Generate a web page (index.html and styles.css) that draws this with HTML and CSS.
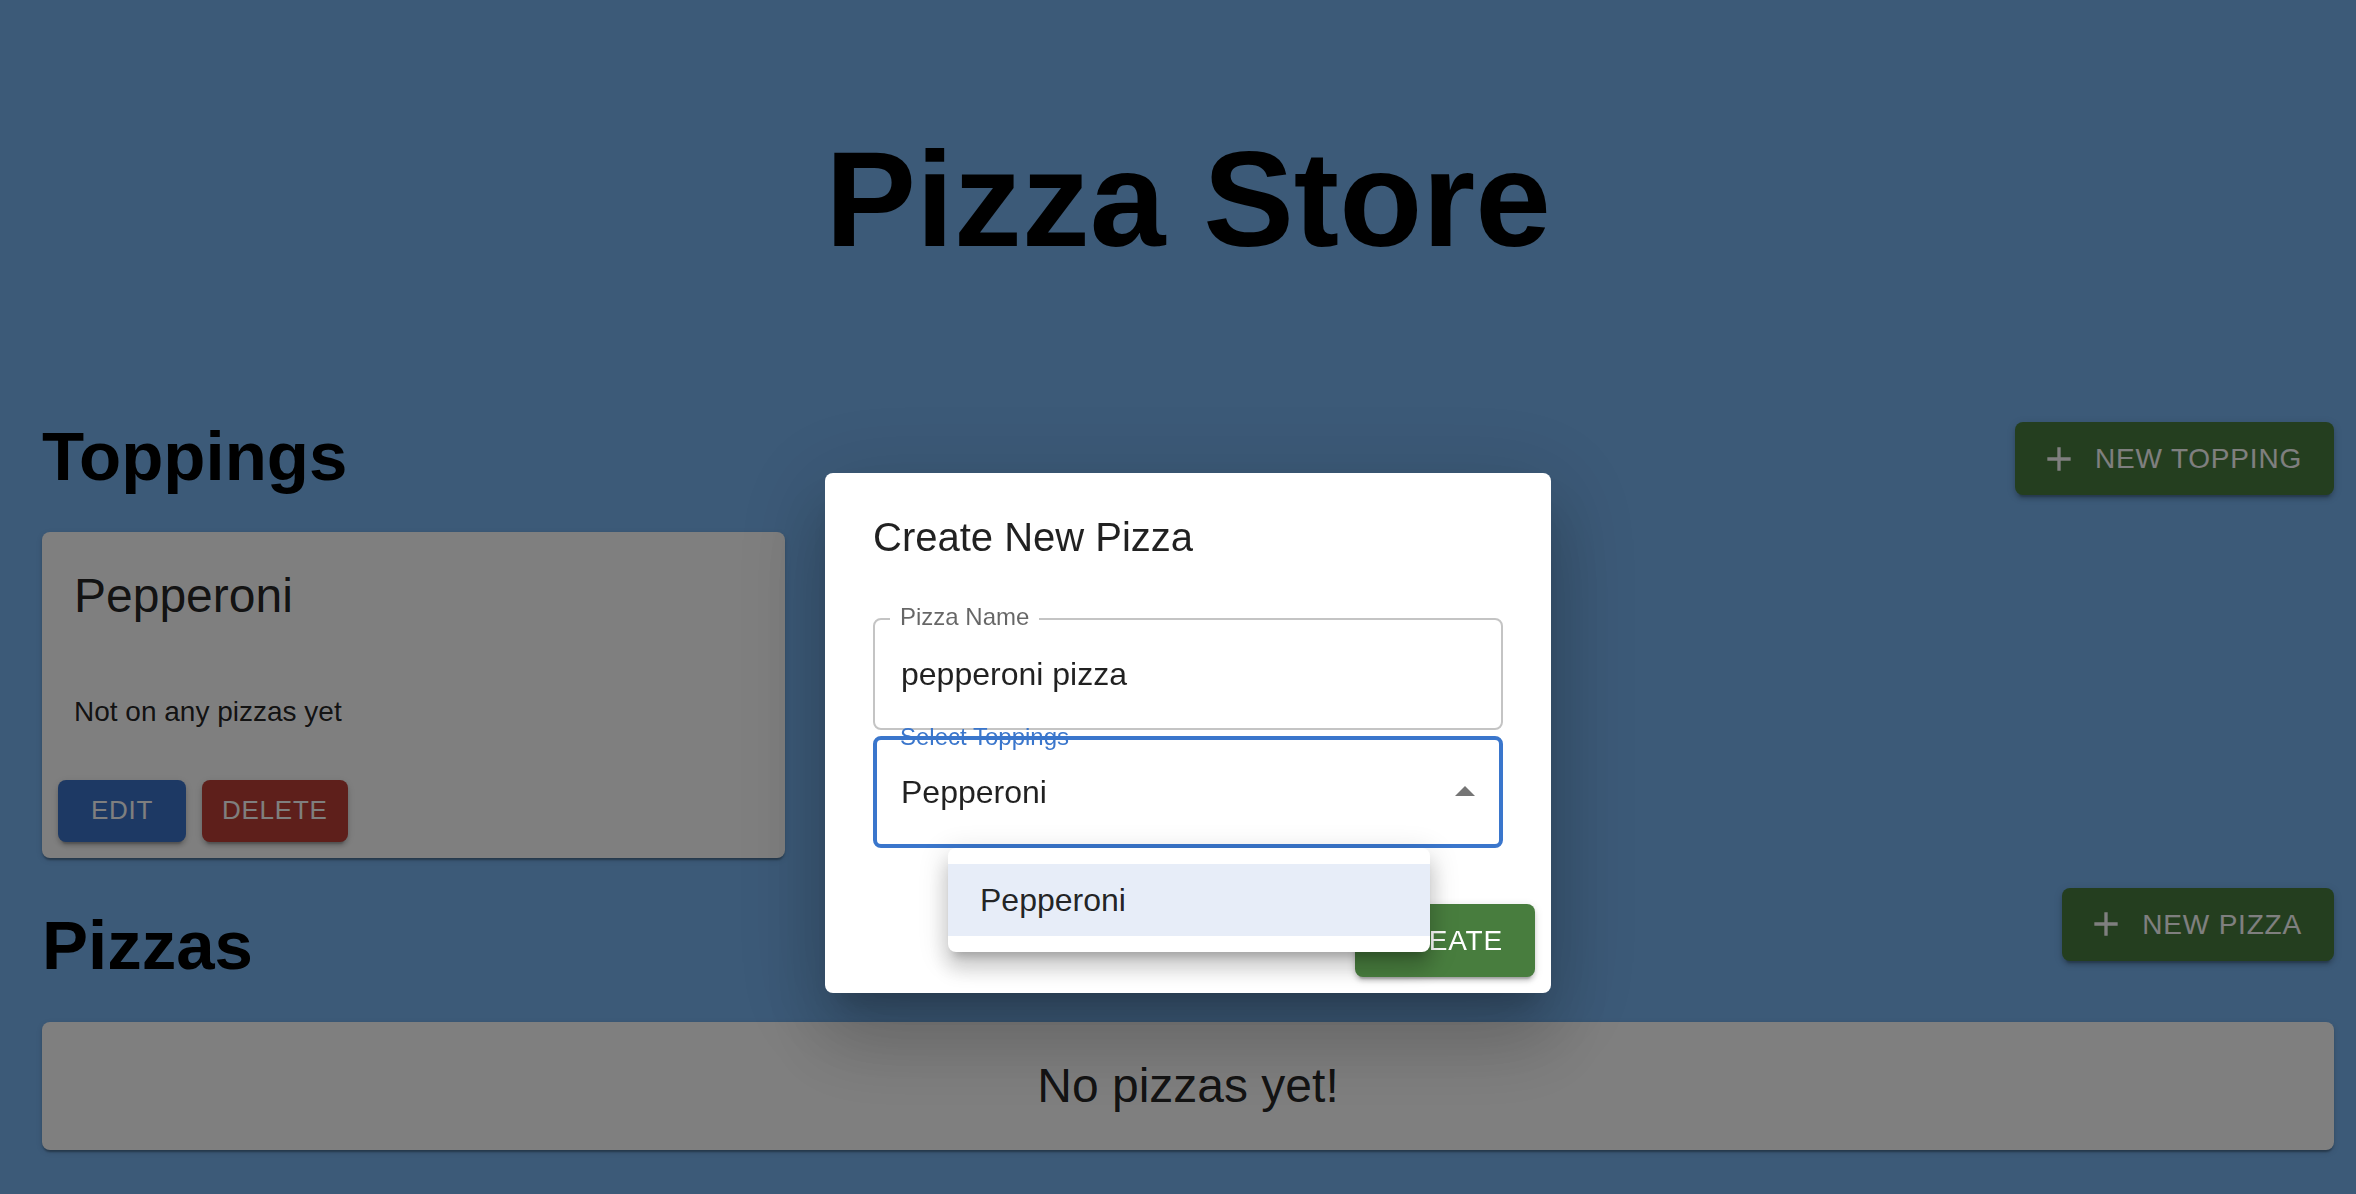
FILE: index.html
```html
<!DOCTYPE html>
<html lang="en">
<head>
<meta charset="utf-8">
<title>Pizza Store</title>
<link rel="stylesheet" href="styles.css">
</head>
<body>
<div class="page">
  <h1 class="title">Pizza Store</h1>

  <section class="section">
    <div class="section-head">
      <h2 class="section-title">Toppings</h2>
      <button class="btn btn-green btn-head-toppings" type="button">
        <svg class="btn-icon" viewBox="0 0 24 24" width="40" height="40"><path d="M19 13h-6v6h-2v-6H5v-2h6V5h2v6h6v2z"/></svg>
        New Topping
      </button>
    </div>
    <div class="grid">
      <div class="card">
        <div class="card-content">
          <div class="card-title">Pepperoni</div>
          <p class="card-text">Not on any pizzas yet</p>
        </div>
        <div class="card-actions">
          <button class="btn btn-small btn-blue" type="button">Edit</button>
          <button class="btn btn-small btn-red" type="button">Delete</button>
        </div>
      </div>
    </div>
  </section>

  <section class="section section-pizzas">
    <div class="section-head">
      <h2 class="section-title section-title-pizzas">Pizzas</h2>
      <button class="btn btn-green" type="button">
        <svg class="btn-icon" viewBox="0 0 24 24" width="40" height="40"><path d="M19 13h-6v6h-2v-6H5v-2h6V5h2v6h6v2z"/></svg>
        New Pizza
      </button>
    </div>
    <div class="card card-empty">
      <div class="card-title">No pizzas yet!</div>
    </div>
  </section>
</div>

<div class="backdrop"></div>

<div class="dialog-container">
  <div class="dialog">
    <h2 class="dialog-title">Create New Pizza</h2>
    <div class="dialog-content">
      <div class="field">
        <span class="field-label">Pizza Name</span>
        <div class="field-value">pepperoni pizza</div>
      </div>
      <div class="field field-select">
        <span class="select-label">Select Toppings</span>
        <div class="select-display">
          <span class="select-value">Pepperoni</span>
          <svg class="select-icon" viewBox="0 0 24 24" width="48" height="48"><path d="M7 14l5-5 5 5z"/></svg>
        </div>
      </div>
    </div>
    <div class="dialog-actions">
      <button class="btn btn-green btn-create" type="button">Create</button>
    </div>
  </div>
</div>

<div class="menu">
  <ul class="menu-list">
    <li class="menu-item selected">Pepperoni</li>
  </ul>
</div>
</body>
</html>
```

FILE: styles.css
```css
* {
  box-sizing: border-box;
}

html, body {
  margin: 0;
  padding: 0;
}

body {
  background: #78b4f0;
  font-family: "Liberation Sans", Arial, Helvetica, sans-serif;
  color: rgba(0, 0, 0, 0.87);
  min-height: 1194px;
  overflow: hidden;
}

.page {
  padding: 118px 22px 0 42px;
}

.title {
  margin: 0;
  text-align: center;
  font-size: 136px;
  line-height: 163px;
  font-weight: 700;
  color: #000;
}

.section {
  margin-top: 136px;
}

.section-pizzas {
  margin-top: 30px;
}

.section-head {
  display: flex;
  justify-content: space-between;
  align-items: flex-start;
}

.section-title {
  margin: 0;
  font-size: 69px;
  line-height: 80px;
  font-weight: 700;
  color: #000;
}

.section-title-pizzas {
  margin-top: 18px;
}

.grid {
  display: grid;
  grid-template-columns: repeat(3, 1fr);
  gap: 32px;
  margin-top: 35px;
}

.section-pizzas .card-empty {
  margin-top: 36px;
}

.card {
  background: #fff;
  border-radius: 8px;
  box-shadow: 0 4px 2px -2px rgba(0,0,0,0.2), 0 2px 2px 0 rgba(0,0,0,0.14), 0 2px 6px 0 rgba(0,0,0,0.12);
  overflow: hidden;
}

.card-content {
  padding: 32px;
}

.card-title {
  font-size: 48px;
  line-height: 64px;
  font-weight: 400;
}

.card-text {
  margin: 64px 0 0;
  font-size: 28px;
  line-height: 40px;
}

.card-actions {
  display: flex;
  align-items: center;
  gap: 16px;
  padding: 16px;
}

.card-empty {
  padding: 32px;
  text-align: center;
}

.btn {
  display: inline-flex;
  align-items: center;
  justify-content: center;
  border: 0;
  margin: 0;
  min-width: 128px;
  padding: 12px 32px;
  border-radius: 8px;
  font-family: inherit;
  font-size: 28px;
  line-height: 49px;
  font-weight: 400;
  letter-spacing: 0.8px;
  text-transform: uppercase;
  color: #fff;
  box-shadow: 0 6px 2px -4px rgba(0,0,0,0.2), 0 4px 4px 0 rgba(0,0,0,0.14), 0 2px 10px 0 rgba(0,0,0,0.12);
  cursor: pointer;
}

.section-head .btn-head-toppings {
  margin-top: 5px;
}

.btn-small {
  padding: 8px 20px;
  font-size: 26px;
  line-height: 45.5px;
  letter-spacing: 0.74px;
}

.btn-green {
  background: #487d3e;
}

.btn-blue {
  background: #3a72c8;
}

.btn-red {
  background: #bc3e36;
}

.btn-icon {
  display: block;
  fill: currentColor;
  margin: 0 16px 0 -8px;
  flex: none;
}

.backdrop {
  position: fixed;
  inset: 0;
  background: rgba(0, 0, 0, 0.5);
}

.dialog-container {
  position: fixed;
  inset: 0;
  display: flex;
  justify-content: center;
  align-items: flex-start;
  padding: 473px 0 0 20px;
}

.dialog {
  width: 726px;
  background: #fff;
  border-radius: 8px;
  box-shadow: 0 22px 30px -14px rgba(0,0,0,0.2), 0 48px 76px 6px rgba(0,0,0,0.14), 0 18px 92px 16px rgba(0,0,0,0.12);
}

.dialog-title {
  margin: 0;
  padding: 32px 48px;
  font-size: 40px;
  line-height: 64px;
  font-weight: 400;
}

.dialog-content {
  padding: 0 48px 40px;
}

.field {
  position: relative;
  margin-top: 17px;
  border: 2px solid #c4c4c4;
  border-radius: 8px;
  padding: 31px 26px;
}

.field-label {
  position: absolute;
  left: 15px;
  top: -15px;
  padding: 0 10px;
  background: #fff;
  font-size: 24px;
  line-height: 24px;
  color: rgba(0, 0, 0, 0.6);
}

.field-value {
  font-size: 32px;
  line-height: 46px;
  color: rgba(0, 0, 0, 0.87);
}

.field-select {
  margin-top: 6px;
  border: 4px solid #3a76cc;
  padding: 29px 24px;
}

.select-label {
  position: absolute;
  left: 23px;
  top: -15px;
  font-size: 24px;
  line-height: 24px;
  color: #3a76cc;
}

.select-display {
  display: flex;
  align-items: center;
  height: 46px;
}

.select-value {
  flex: 1;
  font-size: 32px;
  line-height: 46px;
}

.select-icon {
  display: block;
  flex: none;
  margin-right: -14px;
  fill: rgba(0, 0, 0, 0.54);
}

.dialog-actions {
  display: flex;
  justify-content: flex-end;
  padding: 16px;
}

.menu {
  position: fixed;
  left: 948px;
  top: 848px;
  width: 482px;
  background: #fff;
  border-radius: 8px;
  box-shadow: 0 10px 10px -6px rgba(0,0,0,0.2), 0 16px 20px 2px rgba(0,0,0,0.14), 0 6px 28px 4px rgba(0,0,0,0.12);
}

.menu-list {
  list-style: none;
  margin: 0;
  padding: 16px 0;
}

.menu-item {
  padding: 12px 32px;
  font-size: 32px;
  line-height: 48px;
  color: rgba(0, 0, 0, 0.87);
}

.menu-item.selected {
  background: #e7edf8;
}
```
